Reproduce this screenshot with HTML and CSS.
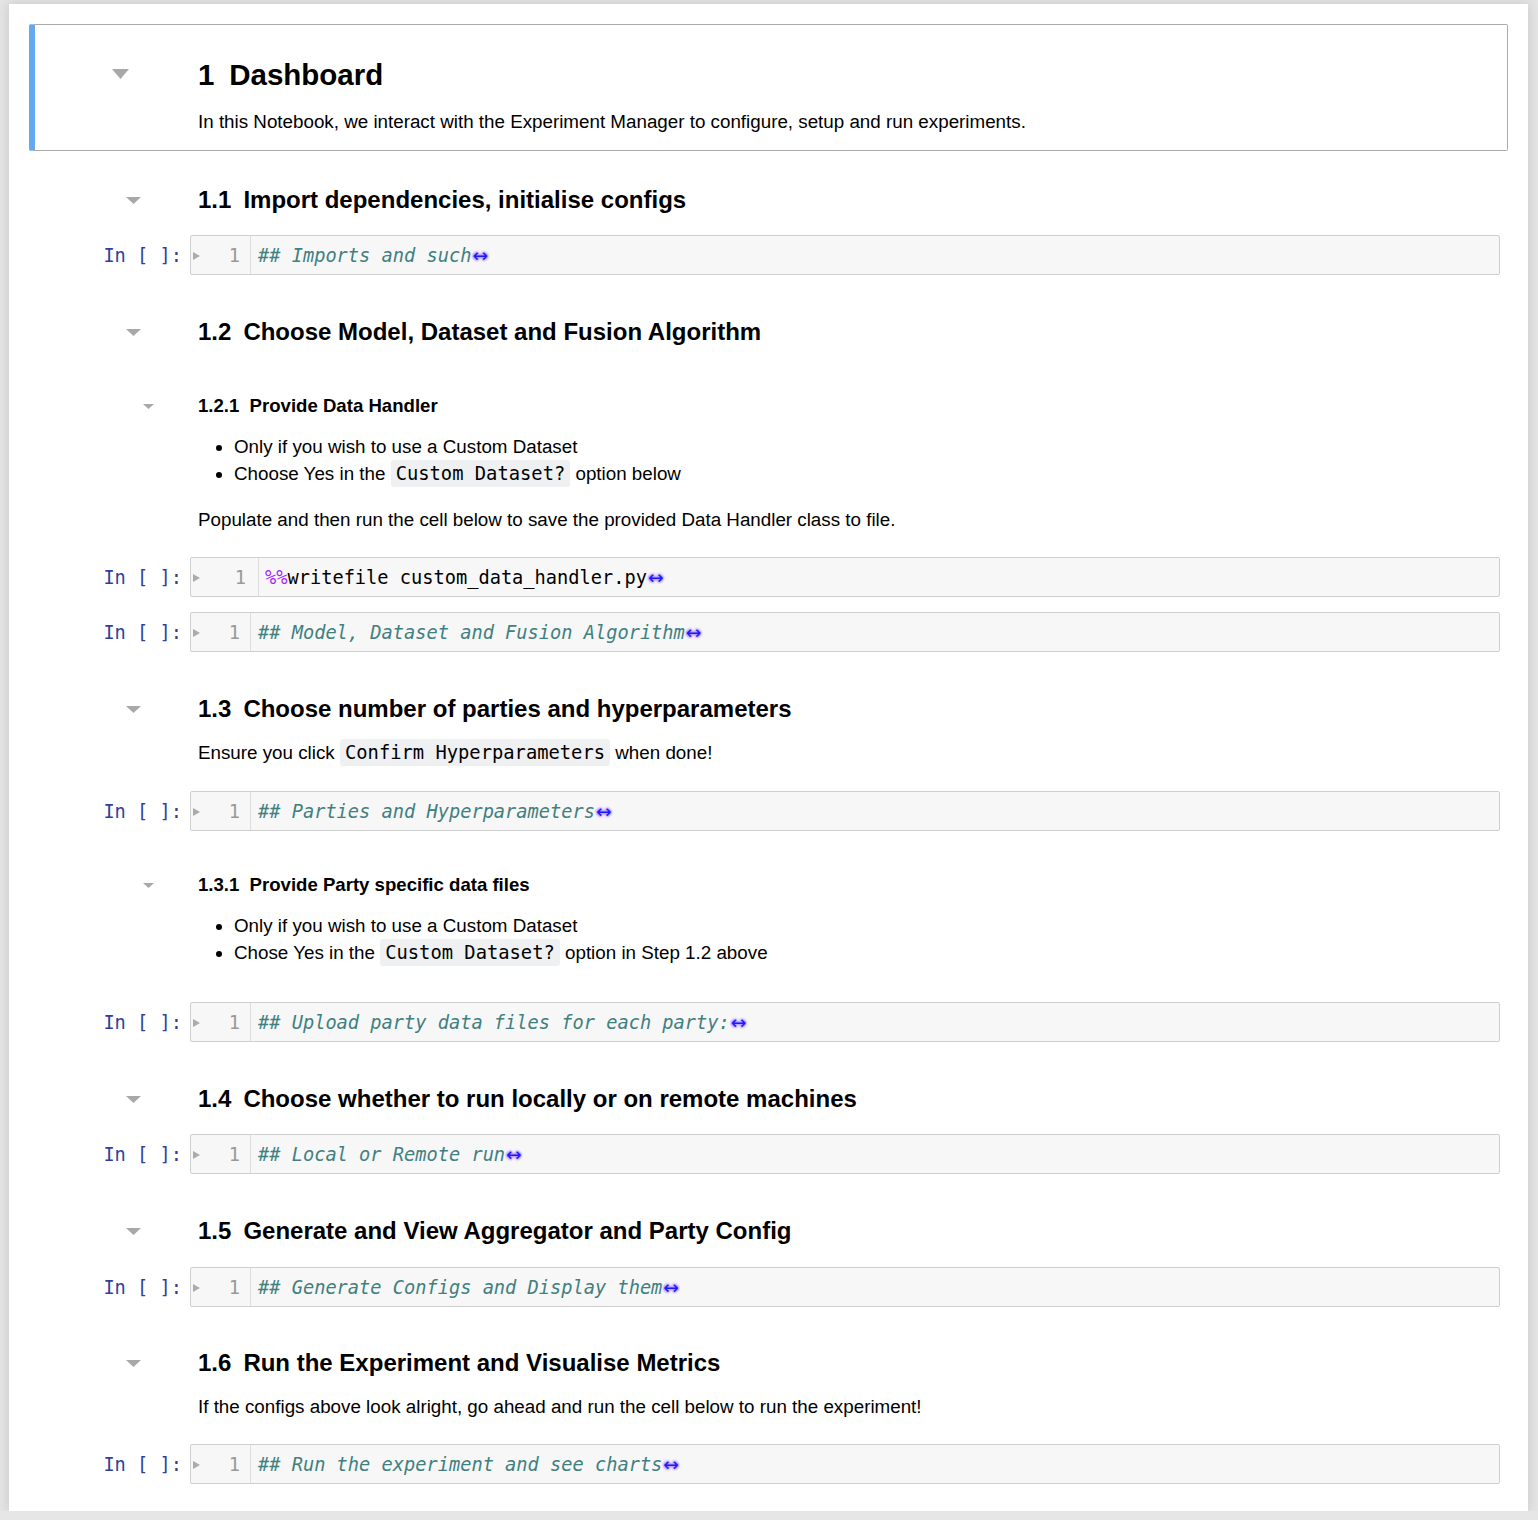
FILE: index.html
```html
<!DOCTYPE html>
<html lang="en">
<head>
<meta charset="utf-8">
<title>Dashboard</title>
<link rel="stylesheet" href="styles.css">
</head>
<body>
<div class="notebook">

  <div class="cell selected">
    <div class="prompt fold-h1"><svg class="tri" width="17" height="10" viewBox="0 0 17 10"><polygon points="0,0 17,0 8.5,10"/></svg></div>
    <div class="md">
      <h1 class="h1"><span class="num">1</span>Dashboard</h1>
      <p class="p">In this Notebook, we interact with the Experiment Manager to configure, setup and run experiments.</p>
    </div>
  </div>

  <div class="row h2row m33">
    <div class="prompt fold-h2"><svg class="tri" width="15" height="7" viewBox="0 0 15 7"><polygon points="0,0 15,0 7.5,7"/></svg></div>
    <div class="md"><h2 class="h2"><span class="num">1.1</span>Import dependencies, initialise configs</h2></div>
  </div>

  <div class="row code-row m19">
    <div class="prompt in">In [ ]:</div>
    <div class="input">
      <div class="gutter"><span class="run"></span><span class="ln">1</span></div>
      <div class="code"><span class="cm">## Imports and such</span><span class="fm">↔</span></div>
    </div>
  </div>

  <div class="row h2row m41">
    <div class="prompt fold-h2"><svg class="tri" width="15" height="7" viewBox="0 0 15 7"><polygon points="0,0 15,0 7.5,7"/></svg></div>
    <div class="md"><h2 class="h2"><span class="num">1.2</span>Choose Model, Dataset and Fusion Algorithm</h2></div>
  </div>

  <div class="row h4row m46">
    <div class="prompt fold-h4"><svg class="tri" width="11" height="5" viewBox="0 0 11 5"><polygon points="0,0 11,0 5.5,5"/></svg></div>
    <div class="md"><h4 class="h4"><span class="num">1.2.1</span>Provide Data Handler</h4></div>
  </div>

  <div class="row m15">
    <div class="prompt"></div>
    <div class="md">
      <ul class="list">
        <li>Only if you wish to use a Custom Dataset</li>
        <li>Choose Yes in the <code class="ic">Custom Dataset?</code> option below</li>
      </ul>
    </div>
  </div>

  <div class="row m19">
    <div class="prompt"></div>
    <div class="md"><p class="p">Populate and then run the cell below to save the provided Data Handler class to file.</p></div>
  </div>

  <div class="row code-row m24">
    <div class="prompt in">In [ ]:</div>
    <div class="input">
      <div class="gutter wide"><span class="run"></span><span class="ln">1</span></div>
      <div class="code wide"><span class="magic">%%</span>writefile custom_data_handler.py<span class="fm">↔</span></div>
    </div>
  </div>

  <div class="row code-row m15">
    <div class="prompt in">In [ ]:</div>
    <div class="input">
      <div class="gutter"><span class="run"></span><span class="ln">1</span></div>
      <div class="code"><span class="cm">## Model, Dataset and Fusion Algorithm</span><span class="fm">↔</span></div>
    </div>
  </div>

  <div class="row h2row m41">
    <div class="prompt fold-h2"><svg class="tri" width="15" height="7" viewBox="0 0 15 7"><polygon points="0,0 15,0 7.5,7"/></svg></div>
    <div class="md"><h2 class="h2"><span class="num">1.3</span>Choose number of parties and hyperparameters</h2></div>
  </div>

  <div class="row m14">
    <div class="prompt"></div>
    <div class="md"><p class="p">Ensure you click <code class="ic">Confirm Hyperparameters</code> when done!</p></div>
  </div>

  <div class="row code-row m25">
    <div class="prompt in">In [ ]:</div>
    <div class="input">
      <div class="gutter"><span class="run"></span><span class="ln">1</span></div>
      <div class="code"><span class="cm">## Parties and Hyperparameters</span><span class="fm">↔</span></div>
    </div>
  </div>

  <div class="row h4row m42">
    <div class="prompt fold-h4"><svg class="tri" width="11" height="5" viewBox="0 0 11 5"><polygon points="0,0 11,0 5.5,5"/></svg></div>
    <div class="md"><h4 class="h4"><span class="num">1.3.1</span>Provide Party specific data files</h4></div>
  </div>

  <div class="row m15">
    <div class="prompt"></div>
    <div class="md">
      <ul class="list">
        <li>Only if you wish to use a Custom Dataset</li>
        <li>Chose Yes in the <code class="ic">Custom Dataset?</code> option in Step 1.2 above</li>
      </ul>
    </div>
  </div>

  <div class="row code-row m36">
    <div class="prompt in">In [ ]:</div>
    <div class="input">
      <div class="gutter"><span class="run"></span><span class="ln">1</span></div>
      <div class="code"><span class="cm">## Upload party data files for each party:</span><span class="fm">↔</span></div>
    </div>
  </div>

  <div class="row h2row m41">
    <div class="prompt fold-h2"><svg class="tri" width="15" height="7" viewBox="0 0 15 7"><polygon points="0,0 15,0 7.5,7"/></svg></div>
    <div class="md"><h2 class="h2"><span class="num">1.4</span>Choose whether to run locally or on remote machines</h2></div>
  </div>

  <div class="row code-row m19">
    <div class="prompt in">In [ ]:</div>
    <div class="input">
      <div class="gutter"><span class="run"></span><span class="ln">1</span></div>
      <div class="code"><span class="cm">## Local or Remote run</span><span class="fm">↔</span></div>
    </div>
  </div>

  <div class="row h2row m41">
    <div class="prompt fold-h2"><svg class="tri" width="15" height="7" viewBox="0 0 15 7"><polygon points="0,0 15,0 7.5,7"/></svg></div>
    <div class="md"><h2 class="h2"><span class="num">1.5</span>Generate and View Aggregator and Party Config</h2></div>
  </div>

  <div class="row code-row m20">
    <div class="prompt in">In [ ]:</div>
    <div class="input">
      <div class="gutter"><span class="run"></span><span class="ln">1</span></div>
      <div class="code"><span class="cm">## Generate Configs and Display them</span><span class="fm">↔</span></div>
    </div>
  </div>

  <div class="row h2row m40">
    <div class="prompt fold-h2"><svg class="tri" width="15" height="7" viewBox="0 0 15 7"><polygon points="0,0 15,0 7.5,7"/></svg></div>
    <div class="md"><h2 class="h2"><span class="num">1.6</span>Run the Experiment and Visualise Metrics</h2></div>
  </div>

  <div class="row m14">
    <div class="prompt"></div>
    <div class="md"><p class="p">If the configs above look alright, go ahead and run the cell below to run the experiment!</p></div>
  </div>

  <div class="row code-row m24">
    <div class="prompt in">In [ ]:</div>
    <div class="input">
      <div class="gutter"><span class="run"></span><span class="ln">1</span></div>
      <div class="code"><span class="cm">## Run the experiment and see charts</span><span class="fm">↔</span></div>
    </div>
  </div>

</div>
</body>
</html>
```

FILE: styles.css
```css
* { box-sizing: border-box; }

html {
  background: #e6e6e6;
}

body {
  margin: 0;
  padding: 4px 10px 0 9px;
  background: #e6e6e6;
  font-family: "Liberation Sans", Arial, sans-serif;
  color: #000;
}

.notebook {
  width: 1519px;
  background: #fff;
  padding: 20px 20px 27px;
  box-shadow: 0 0 12px 1px rgba(87, 87, 87, 0.2);
}

/* selected markdown cell */
.cell.selected {
  display: grid;
  grid-template-columns: 155px 1fr;
  border: 1px solid #ababab;
  border-left: 6px solid #64a8f0;
  border-radius: 2px;
  padding: 5px 0 15px;
}

.row {
  display: grid;
  grid-template-columns: 161px 1fr;
}

.m14 { margin-top: 14px; }
.m15 { margin-top: 15px; }
.m19 { margin-top: 19px; }
.m20 { margin-top: 20px; }
.m24 { margin-top: 24px; }
.m25 { margin-top: 25px; }
.m33 { margin-top: 33px; }
.m36 { margin-top: 36px; }
.m40 { margin-top: 40px; }
.m41 { margin-top: 41px; }
.m42 { margin-top: 42px; }
.m46 { margin-top: 46px; }

/* prompts / fold toggles */
.prompt {
  display: flex;
  justify-content: flex-end;
  align-items: center;
}

.tri polygon { fill: #a8a8a8; }

.fold-h1 {
  align-items: flex-start;
  padding-top: 39px;
  padding-right: 61px;
}

.fold-h2 { padding-right: 49px; }
.fold-h4 { padding-right: 36px; }

.in {
  font-family: "DejaVu Sans Mono", monospace;
  font-size: 18.67px;
  color: #303f9f;
  padding-right: 8px;
  white-space: pre;
}

/* markdown */
.md {
  padding-left: 8px;
}

.h1, .h2, .h4, .p {
  margin: 0;
}

.num {
  margin-right: 0.5em;
}

.h1 {
  font-size: 29.5px;
  font-weight: bold;
  line-height: 40px;
  margin-top: 25px;
}

.cell.selected .p {
  margin-top: 13px;
}

.h2 {
  font-size: 24px;
  font-weight: bold;
  line-height: 32px;
}

.h4 {
  font-size: 18.6px;
  font-weight: bold;
  line-height: 24px;
}

.h4 .num {
  margin-right: 0.55em;
}

.p {
  font-size: 18.8px;
  line-height: 27px;
}

.list {
  margin: 0;
  padding-left: 36px;
  font-size: 18.8px;
  line-height: 27px;
}

.ic {
  font-family: "DejaVu Sans Mono", monospace;
  font-size: 18.8px;
  background: #eff0f1;
  border-radius: 3px;
  padding: 3px 5px;
}

/* code cells */
.input {
  display: flex;
  align-items: stretch;
  height: 40px;
  margin-right: 8px;
  background: #f7f7f7;
  border: 1px solid #cfcfcf;
  border-radius: 2px;
  font-family: "DejaVu Sans Mono", monospace;
  font-size: 18.67px;
}

.gutter {
  width: 60px;
  display: flex;
  align-items: center;
  justify-content: space-between;
  padding: 0 10px 0 2px;
  border-right: 1px solid #dddddd;
  color: #999;
}

.gutter.wide {
  width: 68px;
  padding-right: 12px;
}

.run {
  width: 0;
  height: 0;
  border-left: 7px solid #ababab;
  border-top: 4px solid transparent;
  border-bottom: 4px solid transparent;
  margin-top: 2px;
}

.code {
  display: flex;
  align-items: center;
  padding-left: 7px;
  white-space: pre;
  color: #000;
}

.code.wide { padding-left: 6px; }

.cm {
  color: #408080;
  font-style: italic;
}

.magic {
  color: #aa22ff;
}

.fm {
  color: #1a1aff;
  font-family: "DejaVu Sans", sans-serif;
  font-style: normal;
  font-size: 18.67px;
  margin-left: 1px;
  text-shadow: #b9f 1px 1px 2px, #b9f -1px -1px 2px, #b9f 1px -1px 2px, #b9f -1px 1px 2px;
}
```
